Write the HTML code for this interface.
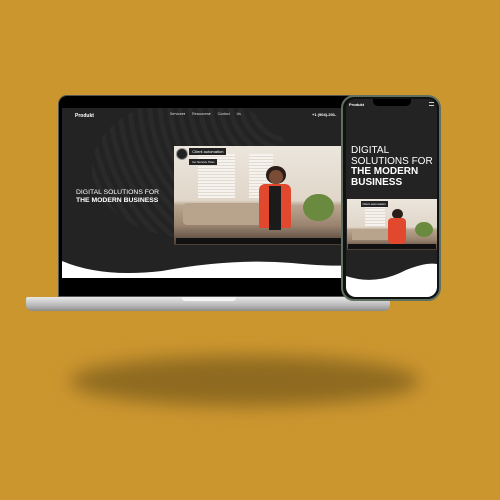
<!DOCTYPE html><html><head><style>
*{margin:0;padding:0;box-sizing:border-box}
body{width:500px;height:500px;background:#cc962f;position:relative;overflow:hidden;font-family:"Liberation Sans",sans-serif}
.a{position:absolute}
.vid{position:absolute;overflow:hidden;background:linear-gradient(#ece6dd 0%,#e0d6c9 55%,#b9a58f 60%,#9a8470 80%,#4b3d33 100%)}
.vid .w{position:absolute;background:repeating-linear-gradient(#f6f3ee 0 2px,#e0dad1 2px 3px)}
</style></head><body>
<div class="a" style="left:70px;top:356px;width:350px;height:50px;border-radius:50%;background:#8e6a20;filter:blur(9px)"></div>
<!-- laptop -->
<div class="a" style="left:58px;top:95px;width:300px;height:202px;background:#000;border-radius:9px 9px 0 0;border:1px solid #555"></div>
<div class="a" style="left:62px;top:108px;width:290px;height:170px;background:#232323;overflow:hidden">
 <div class="a" style="left:30px;top:-10px;width:200px;height:140px;border-radius:50%;background:repeating-radial-gradient(circle at 100% 0,#2b2b2b 0 5px,#232323 5px 10px);opacity:.8"></div>
 <div class="a" style="left:13px;top:5px;color:#fff;font-size:5px;font-weight:bold">Produkt</div>
 <div class="a" style="left:108px;top:4px;color:#ddd;font-size:3.5px;word-spacing:6px">Services▾ Resources▾ Contact&nbsp;Us</div>
 <div class="a" style="left:250px;top:4px;color:#fff;font-size:4px;font-weight:bold">+1 (904)-201-</div>
 <div class="a" style="left:14px;top:81px;color:#fff;font-size:6.8px;line-height:8px">DIGITAL SOLUTIONS FOR<br><b>THE MODERN BUSINESS</b></div>
 <svg class="a" style="left:0;top:145px" width="290" height="30"><path d="M0 8 Q40 25 100 18 Q170 5 230 10 Q270 14 290 12 V25 H0Z" fill="#fff"/><rect y="25" width="290" height="5" fill="#000"/></svg>
</div>
<div class="vid" style="left:174px;top:146px;width:170px;height:99px">
 <div class="w" style="left:14%;top:8%;width:22%;height:45%"></div><div class="w" style="left:44%;top:8%;width:14%;height:45%"></div>
 <div class="a" style="left:5%;top:58%;width:55%;height:22%;background:#b8a48c;border-radius:4px"></div>
 <div class="a" style="left:54%;top:20%;width:12%;height:18%;background:#2a1d18;border-radius:50%"></div>
 <div class="a" style="left:56%;top:24%;width:8%;height:14%;background:#7a4c36;border-radius:50%"></div>
 <div class="a" style="left:50%;top:38%;width:19%;height:45%;background:#e2482e;border-radius:6px 6px 2px 2px"></div>
 <div class="a" style="left:56%;top:40%;width:7%;height:45%;background:#1b1b1b"></div>
 <div class="a" style="left:76%;top:48%;width:18%;height:28%;background:#6a8a3f;border-radius:50%"></div>
 <div class="a" style="left:1%;top:2%;width:7%;height:12%;border-radius:50%;border:1px solid #999;background:#222"></div>
 <div class="a" style="left:9%;top:2%;background:#222;color:#fff;font-size:4px;padding:1px 3px">Client automation</div>
 <div class="a" style="left:9%;top:13%;background:#222;color:#fff;font-size:3px;padding:1px 3px">Go Service Titan</div>
 <div class="a" style="left:1%;bottom:1px;width:98%;height:6px;background:#111"></div>
</div>
<div class="a" style="left:26px;top:297px;width:364px;height:14px;border-radius:2px 2px 6px 6px;background:linear-gradient(#e8e8e8,#b9b9b9 60%,#8c8c8c)"></div>
<div class="a" style="left:182px;top:297px;width:54px;height:4px;background:#f4f4f4;border-radius:0 0 3px 3px"></div>
<!-- phone -->
<div class="a" style="left:341px;top:95px;width:100px;height:206px;border-radius:13px;background:#111;border:2px solid #607060"></div>
<div class="a" style="left:346px;top:99px;width:91px;height:198px;border-radius:10px;background:#232323;overflow:hidden">
 <div class="a" style="left:27px;top:0;width:38px;height:7px;background:#000;border-radius:0 0 5px 5px"></div>
 <div class="a" style="left:3px;top:3px;color:#fff;font-size:4px;font-weight:bold">Produkt</div>
 <div class="a" style="left:83px;top:3px;width:5px;height:4px;border-top:1px solid #ccc;border-bottom:1px solid #ccc"></div>
 <div class="a" style="left:5px;top:47px;color:#fff;font-size:10px;line-height:10.5px">DIGITAL<br>SOLUTIONS FOR<br><b>THE MODERN<br>BUSINESS</b></div>
 <svg class="a" style="left:0;top:163px" width="91" height="35"><path d="M0 14 Q30 24 60 8 Q80 0 91 2 V35 H0Z" fill="#fff"/></svg>
</div>
<div class="vid" style="left:347px;top:199px;width:90px;height:51px">
 <div class="w" style="left:20%;top:8%;width:22%;height:45%"></div>
 <div class="a" style="left:5%;top:58%;width:50%;height:22%;background:#b8a48c"></div>
 <div class="a" style="left:50%;top:20%;width:12%;height:20%;background:#2a1d18;border-radius:50%"></div>
 <div class="a" style="left:46%;top:38%;width:20%;height:50%;background:#e2482e;border-radius:4px"></div>
 <div class="a" style="left:76%;top:45%;width:20%;height:30%;background:#6a8a3f;border-radius:50%"></div>
 <div class="a" style="left:15%;top:3%;background:#222;color:#fff;font-size:3px;padding:1px 2px">Client automation</div>
 <div class="a" style="left:1%;bottom:1px;width:98%;height:5px;background:#111"></div>
</div>
</body></html>
